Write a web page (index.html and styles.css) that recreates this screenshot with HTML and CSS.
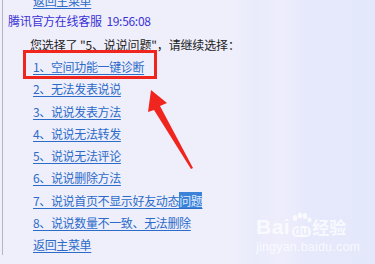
FILE: index.html
```html
<!DOCTYPE html>
<html>
<head>
<meta charset="utf-8">
<link rel="stylesheet" href="styles.css">
</head>
<body>
<div class="page">
  <div class="chat">
    <a class="link back-top">返回主菜单</a>
    <div class="title">腾讯官方在线客服&nbsp;&nbsp;19:56:08</div>
    <div class="msg">
      <p class="prompt">您选择了 "5、说说问题"，请继续选择：</p>
      <ul class="menu">
        <li><a class="link">1、空间功能一键诊断</a></li>
        <li><a class="link">2、无法发表说说</a></li>
        <li><a class="link">3、说说发表方法</a></li>
        <li><a class="link">4、说说无法转发</a></li>
        <li><a class="link">5、说说无法评论</a></li>
        <li><a class="link">6、说说删除方法</a></li>
        <li><a class="link">7、说说首页不显示好友动态<span class="sel">问题</span></a></li>
        <li><a class="link">8、说说数量不一致、无法删除</a></li>
        <li><a class="link">返回主菜单</a></li>
      </ul>
    </div>
  </div>
  <div class="mark-box"></div>
  <svg class="arrow" width="60" height="100" viewBox="0 0 60 100">
    <polygon points="11,8 27,21 20,24 53,86 51,87 14,28 8,30" fill="#f0261e"/>
  </svg>
  <div class="watermark">
    <div class="wm-logo"><span class="wm-bai">Bai</span><span class="wm-paw"><svg width="22" height="22" viewBox="0 0 22 22"><g fill="#fff" fill-opacity="0.75"><ellipse cx="5" cy="6" rx="2.3" ry="3"/><ellipse cx="10" cy="3.5" rx="2.3" ry="3"/><ellipse cx="15" cy="4" rx="2.3" ry="3"/><ellipse cx="19.5" cy="8" rx="2" ry="2.6"/></g></svg><span class="wm-du">du</span></span><span class="wm-jy">经验</span></div>
    <div class="wm-url">jingyan.baidu.com</div>
  </div>
</div>
</body>
</html>
```
FILE: styles.css
```css
html, body {
  margin: 0;
  padding: 0;
}
body {
  width: 375px;
  height: 264px;
  overflow: hidden;
  font-family: "Noto Sans CJK SC", "Liberation Sans", sans-serif;
  font-size: 12px;
}
.page {
  position: relative;
  width: 375px;
  height: 264px;
  overflow: hidden;
  background: linear-gradient(90deg, #efeffc 0%, #efeffc 62%, #e9ebfb 68%, #eeedfc 75%, #e6e9fb 82%, #e4e8fb 100%);
}
.chat {
  margin-left: 2px;
  border-left: 1px solid #b4b4c4;
  height: 100%;
  padding-left: 5px;
  box-sizing: border-box;
}
.link {
  color: #2c6bc8;
  text-decoration: underline;
  text-underline-offset: 2px;
  line-height: 22.25px;
  white-space: nowrap;
  letter-spacing: -0.35px;
}
.back-top {
  display: block;
  margin-top: -9px;
  padding-left: 25px;
  line-height: 20px;
}
.title {
  color: #3b32d6;
  line-height: 20px;
  margin-top: 0px;
  font-size: 12px;
  letter-spacing: -0.3px;
}
.msg {
  padding-left: 22px;
}
.prompt {
  margin: 4px 0 0 0;
  color: #222;
  line-height: 20px;
  letter-spacing: -0.15px;
}
.menu {
  list-style: none;
  margin: 1px 0 0 0;
  padding: 0 0 0 3px;
}
.menu li {
  height: 22.25px;
  line-height: 22.25px;
}
.sel {
  background: #3b82d8;
  color: #dfe9fb;
}
.mark-box {
  position: absolute;
  left: 23px;
  top: 50px;
  width: 128px;
  height: 23px;
  border: 3px solid #f0261e;
}
.arrow {
  position: absolute;
  left: 140px;
  top: 82px;
}
.watermark {
  position: absolute;
  left: 256px;
  top: 212px;
  color: rgba(255,255,255,0.75);
  font-family: "Liberation Sans", sans-serif;
}
.wm-logo {
  display: flex;
  align-items: flex-end;
  height: 26px;
}
.wm-bai {
  font-size: 21px;
  font-weight: bold;
  line-height: 22px;
  letter-spacing: 0.5px;
}
.wm-paw {
  position: relative;
  width: 22px;
  height: 26px;
  display: flex;
  flex-direction: column;
  align-items: center;
}
.wm-du {
  font-size: 12px;
  font-weight: bold;
  line-height: 10px;
  margin-top: -8px;
  background: rgba(255,255,255,0.75);
  color: #e8eafb;
  border-radius: 6px 6px 5px 5px;
  padding: 0 2px 1px;
}
.wm-jy {
  font-family: "Noto Sans CJK SC", sans-serif;
  font-size: 17px;
  line-height: 22px;
  font-weight: bold;
}
.wm-url {
  font-size: 12.5px;
  line-height: 14px;
  margin-top: 2px;
  letter-spacing: 0.2px;
}
```
